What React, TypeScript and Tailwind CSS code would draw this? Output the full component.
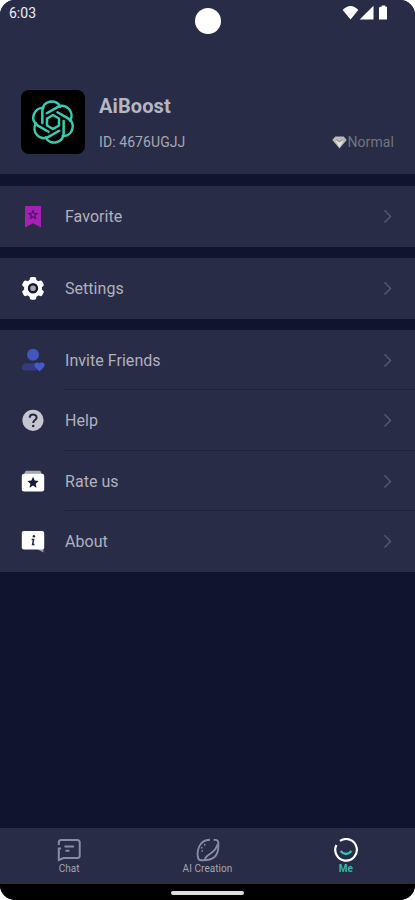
import type { ReactNode } from 'react';

interface MenuRowProps {
  icon: ReactNode;
  label: string;
  divider?: boolean;
}

const STAR = 'M12 2l2.9 6.6 7.1.7-5.4 4.7 1.6 7L12 17.3 5.8 21l1.6-7L2 9.3l7.1-.7z';

const KnotLogo = () => (
  <svg
    width="44"
    height="44"
    viewBox="-66 -66 132 132"
    fill="none"
    stroke="#38cdb0"
    strokeWidth="7.5"
    strokeLinejoin="round"
  >
    <path d="M0-21L18-10.500V10.500L0 21-18 10.500V-10.500z" />
    {[0, 60, 120, 180, 240, 300].map((angle) => (
      <path
        key={angle}
        d="M-32 3V-34C-32-64 9-72 22-46"
        transform={`rotate(${angle})`}
        strokeLinecap="round"
      />
    ))}
  </svg>
);

const FavoriteIcon = () => (
  <svg width="24" height="24" viewBox="0 0 24 24">
    <path d="M4 2h16v21.500l-8-4.300-8 4.300z" fill="#a421b4" />
    <path
      d={STAR}
      transform="translate(7.200 5.900) scale(.4)"
      fill="none"
      stroke="#4b1572"
      strokeWidth="3"
    />
  </svg>
);

const SettingsIcon = () => (
  <svg width="24" height="24" viewBox="0 0 24 24">
    <g fill="#fff">
      <circle cx="12" cy="12.300" r="9" />
      {[0, 60, 120].map((angle) => (
        <rect
          key={angle}
          x="8.700"
          y=".9"
          width="6.600"
          height="22.800"
          rx="2"
          transform={`rotate(${angle} 12 12.300)`}
        />
      ))}
    </g>
    <circle cx="12" cy="12.300" r="4" fill="#a7a7ae" stroke="#171a34" strokeWidth="2.400" />
  </svg>
);

const InviteIcon = () => (
  <svg width="24" height="24" viewBox="0 0 24 24">
    <circle cx="12" cy="6.700" r="6" fill="#4356bd" />
    <path d="M5 15.300h8.500l2.200 7.200H3.500Q1 22.500 1 19.500q0-4.200 4-4.200z" fill="#343b80" />
    <path
      d="M18.500 23.500l-4.300-4.200c-1.700-1.900-.7-4.800 1.800-4.800 1.200 0 2 .4 2.500 1 .5-.6 1.300-1 2.500-1 2.500 0 3.500 2.900 1.800 4.800z"
      fill="#4659d0"
    />
  </svg>
);

const HelpIcon = () => (
  <svg width="24" height="24" viewBox="0 0 24 24">
    <circle cx="12" cy="12.300" r="10.600" fill="#c5c6cf" />
    <path
      d="M8.700 9.800c0-4.500 6.900-4.300 6.900-.3 0 2.500-3.400 2.500-3.400 5.400"
      fill="none"
      stroke="#23263f"
      strokeWidth="2"
    />
    <circle cx="12.200" cy="18" r="1.300" fill="#23263f" />
  </svg>
);

const RateIcon = () => (
  <svg width="24" height="24" viewBox="0 0 24 24">
    <path d="M3 5.500l1.300-3q.4-.8 1.400-.8h12.600q1 0 1.400.8l1.300 3z" fill="#a5a7b4" />
    <rect x=".8" y="4.800" width="22.400" height="17.700" rx="2.200" fill="#fff" />
    <path d={STAR} transform="translate(5.200 6.700) scale(.57)" fill="#171a38" />
  </svg>
);

const AboutIcon = () => (
  <svg width="24" height="24" viewBox="0 0 24 24">
    <path d="M14 19h8.500v4.500z" fill="#9698a8" />
    <rect x=".8" y="2" width="22.400" height="18.500" rx="2" fill="#fff" />
    <circle cx="12.900" cy="7.300" r="1.200" fill="#23263f" />
    <path d="M10.700 10.500h1.900l-1 5h1.900" fill="none" stroke="#23263f" strokeWidth="1.500" />
  </svg>
);

const Chevron = () => (
  <svg width="10" height="16" viewBox="0 0 10 16" fill="none" stroke="#555970" strokeWidth="1.400">
    <path d="M1.500 2.200L7.500 8.400l-6 6.200" />
  </svg>
);

const MenuRow = ({ icon, label, divider }: MenuRowProps) => (
  <div className="flex h-[60.5px] items-center pl-[21px]">
    <span className="w-11 shrink-0">{icon}</span>
    <div
      className={`flex h-full flex-1 items-center justify-between pr-[22px] ${
        divider ? 'border-b border-[#1e213a] pt-px' : ''
      }`}
    >
      <span className="pt-[2px] text-base tracking-[0.04px] text-[#b0b1bd]">{label}</span>
      <Chevron />
    </div>
  </div>
);

const StatusBar = () => (
  <div className="flex h-[42px] items-start justify-between pl-[9px] pr-[26px]">
    <span className="w-[64px] pt-[3px] text-sm leading-5 text-[#eeeef2]">6:03</span>
    <span className="mt-[8px] h-[26px] w-[26px] rounded-full bg-white" />
    <svg className="mt-[5px]" width="47" height="16" viewBox="0 0 47 16" fill="#fff">
      <path d="M.7 5Q8.500-2.800 16.300 5L8.500 14.500z" />
      <path d="M31.500.8v13.700H17.700z" />
      <path d="M38 1.800h1.700V.6h3.600v1.200H45v12.700h-8V2.800z" />
    </svg>
  </div>
);

const Profile = () => (
  <div className="flex px-[21px] pt-12">
    <div className="flex h-16 w-16 items-center justify-center rounded-lg bg-black">
      <KnotLogo />
    </div>
    <div className="ml-[14px] flex-1">
      <h1 className="mt-[2px] text-xl font-bold leading-7 tracking-[0.1px] text-[#b5b6c2]">AiBoost</h1>
      <div className="mt-[12px] flex items-center justify-between leading-5">
        <span className="text-sm tracking-[0.08px] text-[#a6a7b4]">ID: 4676UGJJ</span>
        <span className="flex items-center text-sm tracking-[0.1px] text-[#73757f]">
          <svg width="15" height="13" viewBox="0 0 15 13">
            <path d="M3.300.5h8.400L14.700 4 7.500 12.500.3 4z" fill="#b9bbb9" />
            <path d="M3.500 4.200l4 2.300 4-2.300-4 7.300z" fill="#e5e6df" />
            <path d="M4.500 3.700l3 2 3-2" fill="none" stroke="#8b8f8f" />
          </svg>
          Normal
        </span>
      </div>
    </div>
  </div>
);

const TabBar = () => (
  <nav className="flex h-14 bg-[#292c47] text-[10px] leading-3 text-[#a3a5b6]">
    <div className="flex flex-1 flex-col items-center pt-[10px]">
      <svg width="24" height="24" viewBox="0 0 24 24" fill="none" stroke="#898ca9" strokeWidth="2">
        <path d="M1.800 7V4.500Q1.800 2 4.300 2h15.900q2.500 0 2.500 2.500v13q0 2.500-2.500 2.500H6.500l-4.700 2V10.500H4M7.500 8.500H17M8.500 12.800h4" />
      </svg>
      <span className="mt-px">Chat</span>
    </div>
    <div className="flex flex-1 flex-col items-center pt-[10px]">
      <svg
        className="ml-[1px]"
        width="24"
        height="24"
        viewBox="0 0 24 24"
        fill="none"
        stroke="#898ca9"
        strokeWidth="1.900"
      >
        <path d="M14 1.800Q6 2 3 9 .8 14 2 19.500q.5 2.500 3 2.700 9 .6 13.500-3.200Q23 15 22.300 4.500 22 2 19.500 1.900h-2" />
        <path d="M21.800 6Q20 12 14.500 15.500 9.500 18.500 8.500 22" />
        <path d="M5 9.500l1.500.5M8 6.500l1.500.5M5.500 13h1.500" strokeWidth="1.500" />
      </svg>
      <span className="mt-px tracking-[0.06px]">AI Creation</span>
    </div>
    <div className="flex flex-1 flex-col items-center pt-[10px] text-[#36b5a8]">
      <svg width="24" height="24" viewBox="0 0 24 24" fill="none">
        <path d="M6 2.900A10.800 10.800 0 1 1 2.400 7" stroke="#fff" strokeWidth="2.200" />
        <path d="M6.500 13q5.500 6 11 0" stroke="#34c5b4" strokeWidth="2.400" />
      </svg>
      <span className="mt-px font-bold">Me</span>
    </div>
  </nav>
);

const App = () => {
  return (
    <div className="h-[900px] w-[415px] bg-white">
      <div
        className="flex h-full flex-col overflow-hidden rounded-[15px] bg-[#10142f]"
        style={{ fontFamily: 'Roboto, sans-serif' }}
      >
        <header className="h-[174px] shrink-0 bg-[#292c47]">
          <StatusBar />
          <Profile />
        </header>

        <main className="flex-1">
          <section className="mt-[12px] bg-[#292c47]">
            <MenuRow icon={<FavoriteIcon />} label="Favorite" />
          </section>
          <section className="mt-[11.5px] bg-[#292c47]">
            <MenuRow icon={<SettingsIcon />} label="Settings" />
          </section>
          <section className="mt-[11px] bg-[#292c47]">
            <MenuRow icon={<InviteIcon />} label="Invite Friends" divider />
            <MenuRow icon={<HelpIcon />} label="Help" divider />
            <MenuRow icon={<RateIcon />} label="Rate us" divider />
            <MenuRow icon={<AboutIcon />} label="About" />
          </section>
        </main>

        <TabBar />
        {/* System gesture bar */}
        <div className="flex h-4 items-start justify-center bg-black pt-[7px]">
          <div className="h-[3.5px] w-[73px] rounded-sm bg-[#dedede]" />
        </div>
      </div>
    </div>
  );
};

export default App;
